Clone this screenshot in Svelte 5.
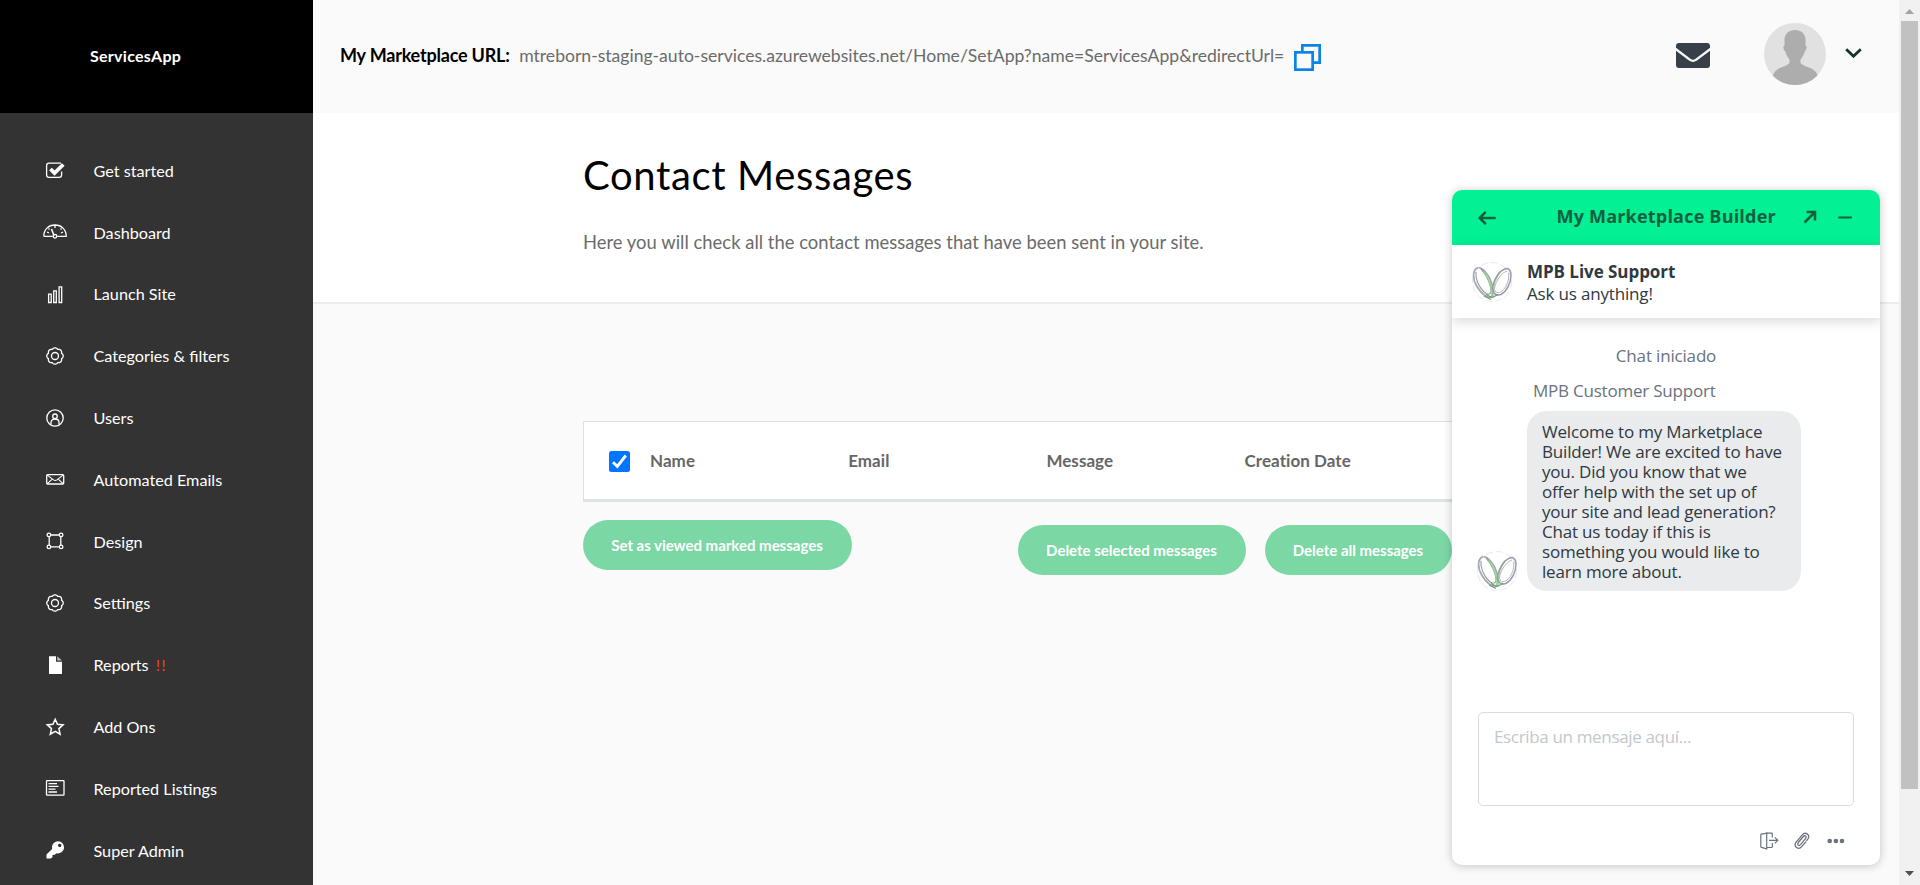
<script>
  const nav = [
    { label: 'Get started', icon: 'check' },
    { label: 'Dashboard', icon: 'gauge' },
    { label: 'Launch Site', icon: 'bars' },
    { label: 'Categories & filters', icon: 'gear' },
    { label: 'Users', icon: 'user' },
    { label: 'Automated Emails', icon: 'mail' },
    { label: 'Design', icon: 'frame' },
    { label: 'Settings', icon: 'gear' },
    { label: 'Reports', icon: 'file', alert: '!!' },
    { label: 'Add Ons', icon: 'star' },
    { label: 'Reported Listings', icon: 'list' },
    { label: 'Super Admin', icon: 'key' }
  ];
  const columns = ['Name', 'Email', 'Message', 'Creation Date'];
  const welcome = [
    'Welcome to my Marketplace',
    'Builder! We are excited to have',
    'you. Did you know that we',
    'offer help with the set up of',
    'your site and lead generation?',
    'Chat us today if this is',
    'something you would like to',
    'learn more about.'
  ];

  // Scalloped outline with eight lobes
  const lobes = 8;
  let gearPath = '';
  for (let i = 0; i <= 96; i++) {
    const a = (i / 96) * Math.PI * 2;
    const r = 7.1 + 1.1 * Math.abs(Math.cos((a * lobes) / 2));
    gearPath += `${i ? 'L' : 'M'}${(12 + r * Math.cos(a)).toFixed(2)} ${(12 + r * Math.sin(a)).toFixed(2)}`;
  }
  gearPath += 'Z';
</script>

{#snippet logo()}
  <svg class="logo" viewBox="0 0 40 40" width="40" height="40" fill="none">
    <circle cx="20" cy="20" r="19.5" stroke="#e3e5ea" stroke-width=".9" stroke-dasharray="7 3" />
    <path d="M6 5.500C0 8 .5 17 5 24.500C9 31 14 35 18 35.500C22 34 22 26 18 17C15 11 11 6 6.500 5.500" stroke="#a5a3bd" stroke-width="1.700" />
    <path d="M4 10C3 17 7 25 12 30C15 33 18 33 19 30C19.500 24 15 13 9 7" stroke="#8fa08f" stroke-width="1.100" />
    <path d="M12 10C17 16 20 24 20 34M28 10C23 16 20.500 24 21 35" stroke="#8fdc83" stroke-width="1.900" opacity=".8" />
    <path d="M35 6.500C28 7 22 17 20.500 25C20 31 24 34 29 32.500C35 29 39 21 39 13C39 9 37 6.500 35 6.500Z" stroke="#9a98b0" stroke-width="1.500" />
    <path d="M35 9C29 11 24 19 22.500 26C22.500 31 26 32 30 29C35 25 37.500 17 36.500 11" stroke="#b2b9b4" stroke-width="1" />
    <path d="M12 34L19 37.500M14 32.500L20 35.500L26 32.500" stroke="#6f9a76" stroke-width="1.200" />
  </svg>
{/snippet}

<div class="page">
  <aside>
    <div class="brand">ServicesApp</div>
    <nav>
      {#each nav as item}
        <div class="item">
          <svg viewBox="0 0 24 24" width="24" height="24" fill="none" stroke="#fff" stroke-width="1.300">
            {#if item.icon === 'check'}
              <path d="M18 5.200H6A2.500 2.500 0 0 0 3.600 7.700V17A2.500 2.500 0 0 0 6 19.400H16.200A2.500 2.500 0 0 0 18.600 17V13.500" />
              <path d="M7.500 11L11.500 15L20.300 6.500" stroke-width="3.800" />
            {:else if item.icon === 'gauge'}
              <path d="M.8 16.300C.8 9.500 5.500 5 12 5S23.200 9.500 23.200 16.300H14.200M9.800 16.300H.8M12 5.500V8M4 12L6 13M20 12L18 13M5.500 8.500L6.500 9.500M18.500 8.500L17.500 9.500" />
              <path d="M8.500 9L11 15.500" stroke-width="1.600" />
              <circle cx="12" cy="16.300" r="1.800" />
            {:else if item.icon === 'bars'}
              <path d="M5.600 12.200H8.200V20.500H5.600ZM10.700 8.800H13.300V20.500H10.700ZM16.100 4.800H18.700V20.500H16.100Z" />
            {:else if item.icon === 'gear'}
              <path d={gearPath} /><circle cx="12" cy="12" r="3.500" />
            {:else if item.icon === 'user'}
              <circle cx="12" cy="12" r="8.200" /><circle cx="12" cy="10.300" r="2.300" />
              <path d="M8 18.500V16.500C8 14.300 9.600 13 12 13S16 14.300 16 16.500V18.500" />
            {:else if item.icon === 'mail'}
              <rect x="3.700" y="7.600" width="17" height="9.400" rx="1" />
              <path d="M4 7.900L10.500 12.900Q12.200 14.100 13.900 12.900L20.400 7.900M4 16.800L9 12.300M20.400 16.800L15.400 12.300" stroke-width="1.100" />
            {:else if item.icon === 'frame'}
              <path d="M7.700 6H16.300M7.700 17.800H16.300M6.200 7.700V16.200M17.800 7.700V16.200" />
              <circle cx="5.900" cy="5.900" r="1.800" /><circle cx="18.100" cy="5.900" r="1.800" />
              <circle cx="5.900" cy="17.900" r="1.800" /><circle cx="18.100" cy="17.900" r="1.800" />
            {:else if item.icon === 'file'}
              <path d="M6 3.200H13V8.800H19V21H6Z" fill="#fff" stroke="none" />
              <path d="M14.200 3.200V7.600H19Z" fill="#bbb" stroke="none" />
            {:else if item.icon === 'star'}
              <path d="M12.200 4.200L14.500 9.300L20.100 9.900L15.900 13.600L17.100 19.200L12.200 16.300L7.300 19.200L8.500 13.600L4.300 9.900L9.900 9.300Z" stroke-width="1.500" />
            {:else if item.icon === 'list'}
              <rect x="3.500" y="4.600" width="17.500" height="14.600" rx=".6" />
              <path d="M5.500 7.700H14M5.500 10.400H15.500M5.500 13.200H12.500M5.500 16H14" />
            {:else}
              <path fill="#fff" stroke="none" fill-rule="evenodd" d="M14.800 3.200A6.100 6.100 0 1 1 13.500 15.200L11.800 16.800L9.500 17V19.200L7.600 20.400H3.500V16.600L9.100 10.900A6.100 6.100 0 0 1 14.800 3.200ZM16.700 5.700A1.700 1.700 0 1 0 16.710 5.700Z" />
            {/if}
          </svg>
          <span>{item.label}</span>
          {#if item.alert}<em>{item.alert}</em>{/if}
        </div>
      {/each}
    </nav>
  </aside>

  <main>
    <header>
      <strong>My Marketplace URL:</strong>
      <span class="url">mtreborn-staging-auto-services.azurewebsites.net/Home/SetApp?name=ServicesApp&amp;redirectUrl=</span>
      <svg class="copy" viewBox="0 0 27 27" width="27" height="27" fill="none" stroke="#0a84e6" stroke-width="2.700">
        <path d="M8.350 7V1.350H25.650V18.650H20" /><rect x="1.350" y="8.350" width="17.300" height="17.300" />
      </svg>
      <svg class="envelope" viewBox="0 0 34 25" width="34" height="25" fill="#373f48">
        <path d="M3 0H31Q34 0 34 3V4.800L19.500 15.800Q17 17.700 14.500 15.800L0 4.800V3Q0 0 3 0Z" />
        <path d="M0 7.800L13 17.600Q17 20.300 21 17.600L34 7.800V22Q34 25 31 25H3Q0 25 0 22Z" />
      </svg>
      <svg class="avatar" viewBox="0 0 62 62" width="62" height="62">
        <defs><clipPath id="round"><circle cx="31" cy="31" r="31" /></clipPath></defs>
        <g clip-path="url(#round)">
          <rect width="62" height="62" fill="#e1e1e1" />
          <path fill="#adadad" d="M31 7C37 7 42 11 41.500 18V22.500C43.500 23 42.500 27 40.800 28.500C39.500 32 38.500 34 36.500 36.500V40C38 42 41 43 45 44.500C50 46.500 52.500 49 54 53L48 62H14L8.500 53C10 49 12.500 46.500 17 44.500C21 43 24 42 25.500 40V36.500C23.500 34 22.500 32 21.200 28.500C19.500 27 18.500 23 20.500 22.500V18C20 11 25 7 31 7Z" />
        </g>
      </svg>
      <svg class="chevron" viewBox="0 0 17 10" width="17" height="10" fill="none" stroke="#123528" stroke-width="2.800"><path d="M1.200 1.200L8.500 8.200L15.800 1.200" /></svg>
    </header>

    <section class="intro">
      <h1>Contact Messages</h1>
      <p>Here you will check all the contact messages that have been sent in your site.</p>
    </section>

    <section class="content">
      <div class="table">
        <span class="checkbox">
          <svg viewBox="0 0 21 21" width="21" height="21" fill="none" stroke="#fff" stroke-width="2.900"><path d="M4 11.200L8.300 15.300L16.800 4.500" /></svg>
        </span>
        {#each columns as column}<b>{column}</b>{/each}
      </div>
      <div class="actions">
        <button class="viewed">Set as viewed marked messages</button>
        <div class="deletes">
          <button class="selected">Delete selected messages</button>
          <button class="all">Delete all messages</button>
        </div>
      </div>
    </section>
  </main>

  <div class="scrollbar">
    <svg viewBox="0 0 21 21" width="21" height="21"><path d="M6 14L10.500 9L15 14Z" fill="#a3a3a3" /></svg>
    <i></i>
    <svg viewBox="0 0 21 21" width="21" height="21"><path d="M6 7L10.500 12L15 7Z" fill="#505050" /></svg>
  </div>

  <div class="chat">
    <div class="bar">
      <svg class="back" viewBox="0 0 18 14" width="18" height="14" fill="none" stroke="#0e603f" stroke-width="2.600" stroke-linecap="round" stroke-linejoin="round"><path d="M16.700 7H1.800M7 1.700L1.700 7L7 12.300" /></svg>
      <span>My Marketplace Builder</span>
      <svg class="popout" viewBox="0 0 14 14" width="14" height="14" fill="none" stroke="#0e603f" stroke-width="2.500"><path d="M1.500 12.500L11.500 2.500M3.500 2H12V10.500" /></svg>
      <svg viewBox="0 0 14 3" width="14" height="3"><rect y=".5" width="14" height="2" rx="1" fill="#0e603f" /></svg>
    </div>
    <div class="agent">
      {@render logo()}
      <div class="who"><b>MPB Live Support</b><span>Ask us anything!</span></div>
    </div>
    <div class="log">
      <div class="started">Chat iniciado</div>
      <div class="from">MPB Customer Support</div>
      <div class="message">
        {@render logo()}
        <div class="bubble">{#each welcome as line}<div>{line}</div>{/each}</div>
      </div>
    </div>
    <div class="input">Escriba un mensaje aquí...</div>
    <div class="tools">
      <svg viewBox="0 0 19 18" width="19" height="18" fill="none" stroke="#68737d" stroke-width="1.200">
        <path d="M5.700 1.300L1.500 2.200Q.8 2.400 .8 3V14.500Q.8 15.200 1.500 15.400L6.700 16.900V.900L5.500 1.300M6.700 1.200H11.500Q12.300 1.200 12.300 2V5.500M6.700 15.500H11.500Q12.300 15.500 12.300 14.700V11M9 8.300H17.800M14.800 5.300L17.800 8.300L14.800 11.300" />
      </svg>
      <svg class="clip" viewBox="0 0 16 18" width="16" height="18" fill="none" stroke="#68737d" stroke-width="1.250" stroke-linecap="round">
        <path d="M4.300 10.500L9.300 4.500C10.800 2.800 13 4.500 11.700 6.300L6.500 12.700C5 14.400 2.900 12.800 4.200 11M11.700 10L7.700 14.700C4.500 18.400-.9 14.500 2 10.300L8.300 2.800C11.200-.6 16.200 2.500 14.200 6.500L12.700 8.700" />
      </svg>
      <svg viewBox="0 0 18 6" width="18" height="6" fill="#68737d"><circle cx="2.700" cy="3" r="2.300" /><circle cx="8.900" cy="3" r="2.300" /><circle cx="15" cy="3" r="2.300" /></svg>
    </div>
  </div>
</div>

<style>
  :global(body) { margin: 0; overflow: hidden; }
  .page { position: relative; display: flex; width: 1920px; height: 885px; overflow: hidden; background: #fafafa; font-family: Lato, sans-serif; }
  svg { display: block; flex: none; }

  aside { flex: none; width: 313px; background: #333; color: #fff; }
  .brand { box-sizing: border-box; height: 113px; padding-left: 90px; background: #000; font-size: 16px; font-weight: 700; letter-spacing: .28px; line-height: 112px; }
  nav { padding-top: 26.500px; }
  .item { display: flex; align-items: center; height: 61.800px; padding-left: 43px; font-size: 16.200px; white-space: nowrap; }
  .item span { margin-left: 26.500px; }
  .item em { margin-left: 7px; color: #ff3d14; font-style: normal; letter-spacing: 1.300px; }

  main { flex: none; width: 1586px; }
  header { display: flex; align-items: center; box-sizing: border-box; height: 113px; padding: 0 37px 3px 27px; }
  header strong { font-size: 18px; letter-spacing: -.200px; color: #000; }
  .url { margin-left: 9.500px; font-size: 17.600px; letter-spacing: -.012px; color: #6b6b6b; padding-top: 1px; }
  .copy { margin: 5px 0 0 9.500px; }
  .envelope { margin-left: auto; }
  .avatar { margin: -2px 19px 0 54px; }
  .chevron { margin-top: -4px; }

  .intro { box-sizing: border-box; height: 191px; padding: 38px 0 0 270px; background: #fff; border-bottom: 2px solid #ececec; }
  h1 { margin: 0; font-size: 40px; font-weight: 400; line-height: 48px; letter-spacing: .64px; color: #000; }
  p { margin: 31px 0 0; font-size: 18.400px; line-height: 24px; letter-spacing: .022px; color: #6b6b6b; }

  .content { padding: 117px 0 0 270px; }
  .table { display: grid; grid-template-columns: 41px repeat(4, 198.200px); align-items: center; box-sizing: border-box; width: 1046px; height: 81px; padding-left: 25px; background: #fff; border: 1px solid #dae1e8; border-bottom: 3px solid #dce2e7; font-size: 17px; letter-spacing: .05px; color: #666; }
  .checkbox { width: 21px; height: 21px; margin-top: 2px; border-radius: 2.500px; background: #0075ff; }
  .actions { display: flex; align-items: flex-start; padding-top: 18px; }
  .deletes { display: flex; gap: 19px; margin: 5px 0 0 166px; }
  button { height: 50px; padding: 0 1px 0 0; border: 0; border-radius: 25px; background: #7bd7a4; color: #fff; font: 700 15px Lato, sans-serif; letter-spacing: -.015px; white-space: nowrap; }
  .viewed { width: 269px; }
  .selected { width: 228px; }
  .all { width: 187px; }

  .scrollbar { display: flex; flex-direction: column; width: 21px; background: #f1f1f1; }
  .scrollbar i { width: 17px; height: 768px; margin: 0 0 75px 2px; background: #c1c1c1; }

  .chat { position: absolute; left: 1452px; top: 190px; display: flex; flex-direction: column; width: 428px; height: 675px; border-radius: 10px; overflow: hidden; background: #fff; box-shadow: 0 1px 10px rgba(0, 0, 0, .22); font: 17px/20px "Open Sans", sans-serif; letter-spacing: -.170px; color: #2f3941; }
  .bar { flex: none; display: flex; align-items: center; box-sizing: border-box; height: 55px; padding: 0 28px 1px 26px; background: #03f094; color: #0e603f; }
  .bar span { margin: -2px 0 0 60.500px; font-size: 18px; font-weight: 700; letter-spacing: .2px; white-space: nowrap; }
  .back { margin-top: 2px; }
  .popout { margin: 0 21px 0 auto; }
  .agent { position: relative; flex: none; display: flex; align-items: center; gap: 15px; box-sizing: border-box; height: 73px; padding-left: 20px; background: #fff; box-shadow: 0 3px 12px rgba(0, 0, 0, .16); }
  .agent b, .agent span { display: block; line-height: 22px; }
  .agent b { letter-spacing: -.05px; }
  .who { padding-top: 2px; }
  .log { flex: none; height: 394px; color: #68737d; }
  .started { padding-top: 28px; text-align: center; }
  .from { padding: 15px 0 0 81px; letter-spacing: -.220px; }
  .message { display: flex; align-items: flex-end; gap: 10px; margin-top: 10px; padding-left: 25px; }
  .bubble { box-sizing: border-box; width: 274px; height: 180px; padding: 11px 0 0 15px; border-radius: 20px; background: #e9ebed; color: #2f3941; letter-spacing: -.190px; white-space: nowrap; }
  .input { flex: none; box-sizing: border-box; width: 376px; height: 94px; margin-left: 26px; padding: 14px 15px; border: 1px solid #d8dcde; border-radius: 5px; color: #c2c8cc; letter-spacing: -.340px; }
  .tools { display: flex; align-items: center; justify-content: flex-end; margin: 26px 35px 0 0; }
  .clip { margin: 0 17px 0 15px; }
</style>
